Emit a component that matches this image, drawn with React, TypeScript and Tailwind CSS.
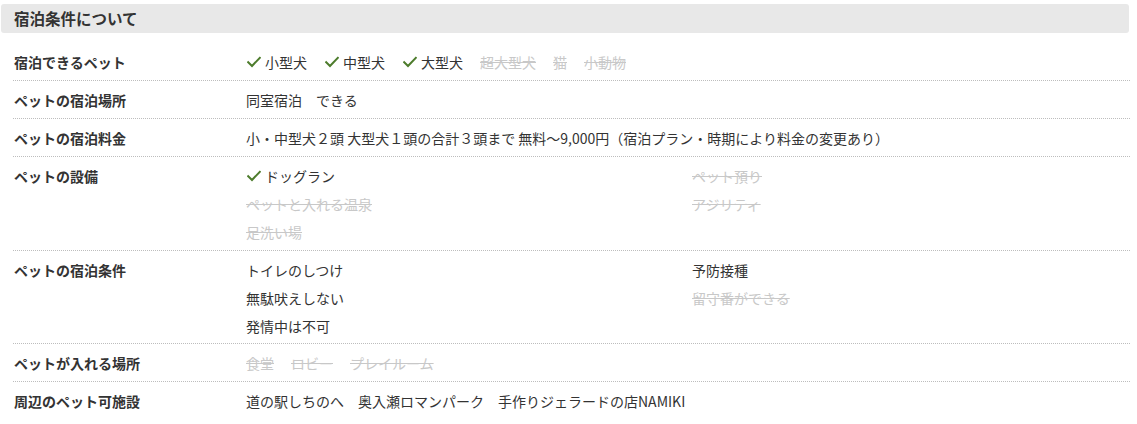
import React from "react";

const Check = () => (
  <svg width="14" height="12" viewBox="0 0 14 12" className="ml-[1px] mr-[4px] shrink-0">
    <path d="M1.2 6.2 L5 10 L12.8 1.8" fill="none" stroke="#4d7c2c" strokeWidth="2" strokeLinecap="square" />
  </svg>
);

type Item = { t: string; on: boolean };

const Tag = ({ it }: { it: Item }) =>
  it.on ? (
    <span className="flex items-center mr-[17px] text-[#333]">
      <Check />
      {it.t}
    </span>
  ) : (
    <span className="mr-[17px] text-[#c8c8c8] line-through">{it.t}</span>
  );

const Row = ({ label, children, last, multi }: { label: string; children: React.ReactNode; last?: boolean; multi?: boolean }) => (
  <div
    className={`flex pt-[5px] ${multi ? "pb-[3.3px]" : "pb-[4.3px]"} ${last ? "" : "border-b border-dotted border-[#bdbdbd]"}`}
  >
    <div className="w-[233px] shrink-0 pl-[1px] font-bold text-[#333] leading-[28px]">{label}</div>
    <div className="flex-1 leading-[28px] text-[#333]">{children}</div>
  </div>
);

const Grid2 = ({ items }: { items: Item[] }) => (
  <div className="grid grid-cols-[446px_1fr]">
    {items.map((it, i) => (
      <div key={i} className="flex">
        <Tag it={it} />
      </div>
    ))}
  </div>
);

export default function App() {
  return (
    <div
      className="w-[1137px] h-[424px] bg-white pt-[4px] text-[14px]"
      style={{ fontFamily: '"Noto Sans CJK JP", "Noto Sans", sans-serif' }}
    >
      <div className="ml-[1px] w-[1128px] h-[29px] rounded-[3px] bg-[#e8e8e8] flex items-center pl-[13px] font-bold text-[15.5px] text-[#333]">
        宿泊条件について
      </div>
      <div className="ml-[13px] w-[1117px] mt-[9.5px]">
        <Row label="宿泊できるペット">
          <div className="flex">
            {[
              { t: "小型犬", on: true },
              { t: "中型犬", on: true },
              { t: "大型犬", on: true },
              { t: "超大型犬", on: false },
              { t: "猫", on: false },
              { t: "小動物", on: false },
            ].map((it, i) => (
              <Tag key={i} it={it} />
            ))}
          </div>
        </Row>
        <Row label="ペットの宿泊場所">
          <span>同室宿泊　できる</span>
        </Row>
        <Row label="ペットの宿泊料金">
          <span>小・中型犬２頭 大型犬１頭の合計３頭まで 無料～9,000円（宿泊プラン・時期により料金の変更あり）</span>
        </Row>
        <Row label="ペットの設備" multi>
          <Grid2
            items={[
              { t: "ドッグラン", on: true },
              { t: "ペット預り", on: false },
              { t: "ペットと入れる温泉", on: false },
              { t: "アジリティ", on: false },
              { t: "足洗い場", on: false },
            ]}
          />
        </Row>
        <Row label="ペットの宿泊条件" multi>
          <div className="grid grid-cols-[446px_1fr]">
            <span>トイレのしつけ</span>
            <span>予防接種</span>
            <span>無駄吠えしない</span>
            <span className="text-[#c8c8c8] line-through">留守番ができる</span>
            <span>発情中は不可</span>
          </div>
        </Row>
        <Row label="ペットが入れる場所">
          <div className="flex">
            <Tag it={{ t: "食堂", on: false }} />
            <Tag it={{ t: "ロビー", on: false }} />
            <Tag it={{ t: "プレイルーム", on: false }} />
          </div>
        </Row>
        <Row label="周辺のペット可施設" last>
          <span>道の駅しちのへ　奥入瀬ロマンパーク　手作りジェラードの店NAMIKI</span>
        </Row>
      </div>
    </div>
  );
}
